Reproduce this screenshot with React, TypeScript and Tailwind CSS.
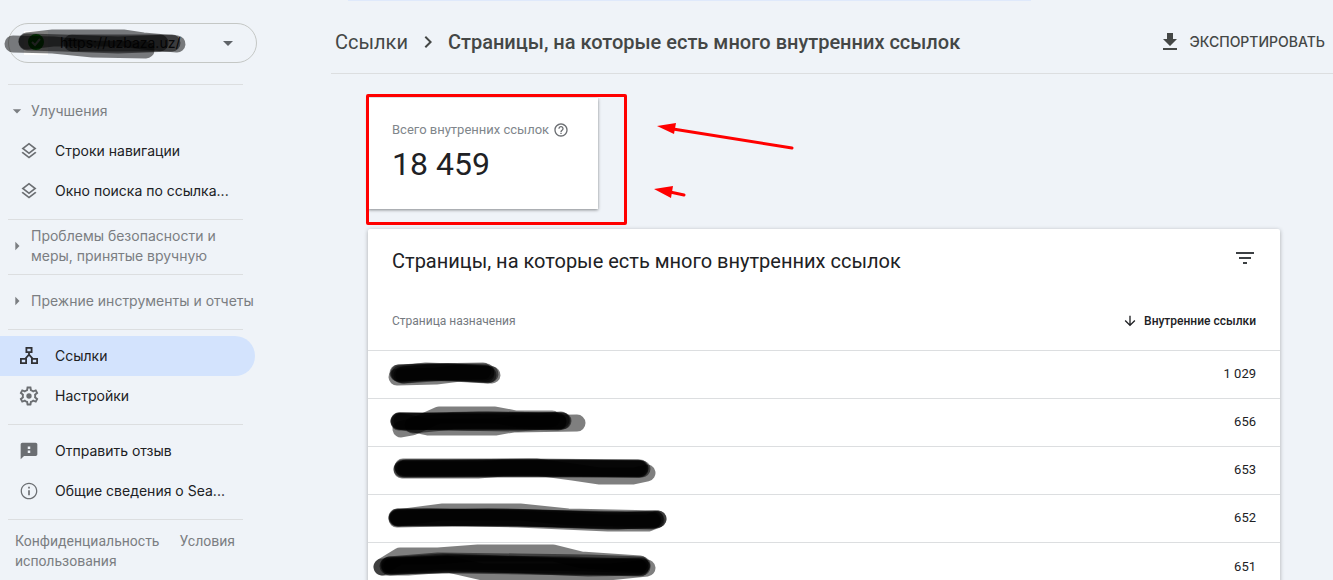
import type { ReactNode } from 'react';

type IconProps = { d: string; className?: string };

function Icon({ d, className = 'size-5' }: IconProps) {
  return (
    <svg viewBox="0 0 24 24" fill="currentColor" aria-hidden="true" className={`shrink-0 ${className}`}>
      <path fillRule="evenodd" d={d} />
    </svg>
  );
}

const icons = {
  layers:
    'M11.99 18.54l-7.37-5.73L3 14.07l9 7 9-7-1.63-1.27zM12 16l7.36-5.73L21 9l-9-7-9 7 1.63 1.27L12 16zm0-11.47L17.74 9 12 13.47 6.26 9 12 4.53z',
  feedback: 'M20 2H4c-1.1 0-2 .9-2 2v18l4-4h14c1.1 0 2-.9 2-2V4c0-1.1-.9-2-2-2zm-6.500 12.500h-3v-3h3v3zm0-5h-3v-3h3v3z',
  info: 'M11 17h2v-6h-2v6zm1-15C6.480 2 2 6.480 2 12s4.480 10 10 10 10-4.480 10-10S17.520 2 12 2zm0 18.500c-4.700 0-8.500-3.800-8.500-8.500S7.300 3.500 12 3.500s8.500 3.800 8.500 8.500-3.800 8.500-8.500 8.500zM11 9h2V7h-2v2z',
  help: 'M11 18h2v-2h-2v2zm1-16C6.480 2 2 6.480 2 12s4.480 10 10 10 10-4.480 10-10S17.520 2 12 2zm0 18c-4.410 0-8-3.590-8-8s3.590-8 8-8 8 3.590 8 8-3.590 8-8 8zm0-14c-2.210 0-4 1.790-4 4h2c0-1.100.900-2 2-2s2 .900 2 2c0 2-3 1.750-3 5h2c0-2.250 3-2.500 3-5 0-2.210-1.790-4-4-4z',
  download: 'M19 9h-4V3H9v6H5l7 7 7-7zM5 18v2h14v-2H5z',
  filter: 'M10 18h4v-2h-4v2zM3 6v2h18V6H3zm3 7h12v-2H6v2z',
  arrowDown: 'M20 12l-1.410-1.410L13 16.170V4h-2v12.170l-5.580-5.590L4 12l8 8 8-8z',
  chevron: 'M10 6L8.590 7.410 13.170 12l-4.580 4.590L10 18l6-6z',
  caretDown: 'M7 10l5 5 5-5z',
  caretRight: 'M10 17l5-5-5-5z',
};

function GearIcon() {
  return (
    <svg viewBox="1.5 1.5 21 21" fill="currentColor" aria-hidden="true" className="size-5 shrink-0">
      <path
        fillRule="evenodd"
        d="M19.430 12.980c.040-.320.070-.640.070-.980s-.030-.660-.070-.980l2.110-1.650c.190-.150.240-.420.120-.640l-2-3.460c-.120-.220-.390-.300-.610-.220l-2.490 1c-.520-.400-1.080-.730-1.690-.980l-.380-2.650C14.460 2.180 14.250 2 14 2h-4c-.250 0-.460.180-.490.420l-.380 2.650c-.610.250-1.170.590-1.690.980l-2.490-1c-.230-.090-.490 0-.610.220l-2 3.460c-.130.220-.070.490.120.640l2.110 1.650c-.040.320-.070.650-.070.980s.030.660.070.980l-2.110 1.650c-.190.150-.240.420-.120.640l2 3.460c.120.220.390.300.610.220l2.490-1c.520.400 1.080.730 1.690.980l.380 2.650c.030.240.240.420.490.420h4c.250 0 .460-.180.490-.420l.380-2.650c.610-.250 1.170-.590 1.690-.980l2.490 1c.230.090.490 0 .610-.220l2-3.460c.120-.220.070-.490-.120-.640l-2.110-1.650zM17.450 11.270c.040.310.050.520.050.730s-.020.430-.050.730l-.140 1.130.890.700 1.080.840-.700 1.210-1.270-.510-1.040-.420-.900.680c-.430.320-.840.560-1.250.730l-1.060.430-.160 1.130-.200 1.350h-1.400l-.190-1.350-.160-1.130-1.060-.430c-.430-.180-.830-.410-1.230-.710l-.910-.700-1.060.430-1.270.510-.700-1.210 1.080-.840.890-.700-.140-1.130c-.030-.310-.050-.540-.050-.740s.020-.430.050-.730l.140-1.130-.890-.700-1.080-.840.700-1.210 1.270.510 1.040.420.900-.680c.430-.320.840-.560 1.250-.730l1.060-.430.160-1.130.200-1.350h1.390l.190 1.350.160 1.130 1.060.430c.430.180.830.410 1.230.710l.910.700 1.060-.430 1.270-.510.700 1.210-1.070.850-.890.700.140 1.130z"
      />
      <circle cx="12" cy="12" r="2.8" />
    </svg>
  );
}

function LinksIcon() {
  return (
    <svg viewBox="0 0 20 20" fill="none" stroke="currentColor" strokeWidth="1.8" aria-hidden="true" className="size-5 shrink-0">
      <path d="M7.4 1.9h5.2v4.2H7.4zM1.9 12.9h5.200v4.200H1.900zM12.900 12.900h5.200v4.200h-5.200zM10 6v3.200M10 8.700L6 13M10 8.700l4 4.300" />
    </svg>
  );
}

function Scribble({ strokes }: { strokes: string[] }) {
  return (
    <svg
      width="300"
      height="48"
      fill="none"
      stroke="#000"
      strokeLinecap="round"
      strokeLinejoin="round"
      aria-hidden="true"
      className="pointer-events-none absolute top-0 left-0 overflow-visible"
    >
      {strokes.map((d) => (
        <path key={d} d={d} strokeWidth="17" strokeOpacity="0.5" />
      ))}
    </svg>
  );
}

const rows = [
  {
    count: '1 029',
    strokes: [
      'M29 26L68 25L92 22L124 24',
      'M30 22L60 21L118 21',
      'M31 22L50 21L85 22L120 24',
      'M34 24L62 21L115 20',
      'M32 23L58 20L110 22L122 23',
      'M36 24L80 21L118 23',
    ],
  },
  {
    count: '656',
    strokes: [
      'M33 30L44 28L71 16L127 16L148 20L184 20',
      'M31 22L60 28L127 28L145 25L209 24',
      'M31 22L55 22L110 21L194 22',
      'M32 22L80 23L150 24L193 21',
      'M45 26L85 22L140 22L190 23',
      'M34 22L100 23L190 22',
      'M31 23L120 21L195 22',
    ],
  },
  {
    count: '653',
    strokes: [
      'M35 20L60 20L168 20L205 25L232 29L265 29L279 26',
      'M34 23L110 23L135 21L272 21',
      'M35 21L80 21L160 20L270 21',
      'M36 22L272 22',
      'M38 21L150 21L271 22',
      'M34 22L200 21L274 22',
    ],
  },
  {
    count: '652',
    strokes: [
      'M29 23L75 17L152 17L200 22L290 24',
      'M30 23L60 22L150 24L240 28L280 28L290 24',
      'M29 22L150 23L240 26L288 25',
      'M29 24L120 22L210 24L285 25',
      'M31 23L160 23L250 26L287 24',
      'M30 22L140 22L230 25L284 26',
    ],
  },
  {
    count: '651',
    strokes: [
      'M14 24L32 13L70 13L110 10L185 10L213 17L272 21',
      'M14 24L40 24L80 21L115 29L240 29L279 25',
      'M21 22L70 18L150 19L220 20L274 22',
      'M22 24L80 20L150 22L220 25L274 24',
      'M20 23L75 19L200 23L272 25',
      'M24 23L100 21L200 22L270 24',
      'M22 22L90 22L210 24L273 23',
    ],
  },
];

function Section({ children }: { children: ReactNode }) {
  return (
    <div className="pb-2">
      <hr className="mr-4 ml-2 border-[#dcdee0]" />
      <div className="pt-1.5">{children}</div>
    </div>
  );
}

function NavItem({ icon, label, active = false }: { icon: ReactNode; label: string; active?: boolean }) {
  return (
    <a
      href="#"
      aria-current={active ? 'page' : undefined}
      className={`mr-1 flex h-10 items-center gap-4 rounded-r-full pr-6 pl-[19px] text-[#202124] ${active ? 'bg-[#d3e3fd]' : ''}`}
    >
      <span className={active ? 'text-[#303134]' : 'text-[#6b6e72]'}>{icon}</span>
      <span className="truncate">{label}</span>
    </a>
  );
}

function GroupButton({ label, open = false }: { label: string; open?: boolean }) {
  return (
    <button
      type="button"
      aria-expanded={open}
      className="flex min-h-10 w-full items-center gap-1 pl-[7px] text-left leading-5 text-[#7b7e82]"
    >
      <Icon d={open ? icons.caretDown : icons.caretRight} />
      <span>{label}</span>
    </button>
  );
}

function Sidebar() {
  return (
    <nav className="w-[259px] shrink-0 pt-[23px] font-[Inter,sans-serif] text-sm">
      <div className="relative mr-0.5 mb-[21px] ml-2 h-10">
        <select
          aria-label="Ресурс"
          className="h-10 w-full appearance-none rounded-full border border-[#c4c7c5] bg-transparent pl-[51px] text-[#202124]"
        >
          <option>https://uzbaza.uz/</option>
        </select>
        <svg width="24" height="24" viewBox="0 0 24 24" aria-hidden="true" className="absolute top-2 left-4">
          <path fill="#fff" d="M0 0h24v24H0z" />
          <circle cx="12" cy="11" r="8" fill="#00a000" />
          <path d="M8 11l3 3 5-6" fill="none" stroke="#fff" strokeWidth="2" />
        </svg>
        <Icon d={icons.caretDown} className="pointer-events-none absolute top-2 right-[17px] size-6 text-[#5f6368]" />
        <Scribble strokes={['M5 21L45 22L85 26L138 27', 'M19 18L45 15L115 15L135 18L169 21', 'M64 20L152 20', 'M19 19L55 20L110 22L164 20']} />
      </div>

      <Section>
        <GroupButton label="Улучшения" open />
        <NavItem icon={<Icon d={icons.layers} />} label="Строки навигации" />
        <NavItem icon={<Icon d={icons.layers} />} label="Окно поиска по ссылка..." />
      </Section>
      <Section>
        <GroupButton label="Проблемы безопасности и меры, принятые вручную" />
      </Section>
      <Section>
        <GroupButton label="Прежние инструменты и отчеты" />
      </Section>
      <Section>
        <NavItem icon={<LinksIcon />} label="Ссылки" active />
        <NavItem icon={<GearIcon />} label="Настройки" />
      </Section>
      <Section>
        <NavItem icon={<Icon d={icons.feedback} />} label="Отправить отзыв" />
        <NavItem icon={<Icon d={icons.info} />} label="Общие сведения о Sea..." />
      </Section>
      <Section>
        <div className="pt-[5px] pr-2 pl-[15px] font-[Roboto,sans-serif] leading-5 text-[#7b7e82]">
          <a href="#" className="mr-5">Конфиденциальность</a>
          <a href="#">Условия использования</a>
        </div>
      </Section>
    </nav>
  );
}

function Header() {
  return (
    <header className="flex h-[74px] items-center justify-between border-b border-[#dcdee0] pt-2.5 pr-2 pl-1 text-[#444746]">
      <div className="flex items-center gap-2 text-xl">
        <a href="#">Ссылки</a>
        <Icon d={icons.chevron} className="size-6" />
        <h1 className="font-medium whitespace-nowrap">Страницы, на которые есть много внутренних ссылок</h1>
      </div>
      <button type="button" className="flex items-center gap-2 font-[Inter,sans-serif] text-sm font-medium uppercase">
        <Icon d={icons.download} className="size-6" />
        Экспортировать
      </button>
    </header>
  );
}

function TotalCard() {
  return (
    <section className="relative h-[111px] w-[230px] bg-white pt-6 pl-6 shadow-[0_1px_3px_rgba(0,0,0,0.45)]">
      <div className="flex items-center gap-1 text-[13px] leading-4 text-[#80868b]">
        Всего внутренних ссылок
        <Icon d={icons.help} className="size-4 text-[#6b6e72]" />
      </div>
      <p className="mt-1.5 text-[32px] leading-10 text-[#202124]">18 459</p>

      {/* annotations */}
      <div className="pointer-events-none absolute -top-1 -left-0.5 h-[131px] w-[261px] rounded-xs border-3 border-[#f00]" />
      <svg width="140" height="110" fill="#f00" stroke="#f00" aria-hidden="true" className="absolute top-0 left-[287px] overflow-visible">
        <path stroke="none" d="M2 28L21 25L19 36zM-1 91L18 88L16 100z" />
        <path fill="none" strokeWidth="3" strokeLinecap="round" d="M18 31L137 50M15 94L29 97" />
      </svg>
    </section>
  );
}

function PagesTable() {
  return (
    <section className="mt-5 rounded-xs bg-white shadow-[0_1px_4px_rgba(0,0,0,0.3)]">
      <div className="flex h-16 items-center justify-between pr-[23px] pl-6">
        <h2 className="text-xl text-[#202124]">Страницы, на которые есть много внутренних ссылок</h2>
        <button type="button" aria-label="Фильтр" className="pb-1.5 text-[#3c4043]">
          <Icon d={icons.filter} className="size-6" />
        </button>
      </div>
      <table className="w-full text-[13px] text-[#202124]">
        <thead>
          <tr className="h-[57px] text-xs">
            <th scope="col" className="pl-6 text-left font-normal text-[#757a80]">Страница назначения</th>
            <th scope="col" className="pr-6 font-medium" aria-sort="descending">
              <button type="button" className="ml-auto flex items-center gap-1.5">
                <Icon d={icons.arrowDown} className="size-4" />
                Внутренние ссылки
              </button>
            </th>
          </tr>
        </thead>
        <tbody>
          {rows.map((row) => (
            <tr key={row.count} className="h-12 border-t border-[#dcdee0]">
              <td className="relative">
                <Scribble strokes={row.strokes} />
              </td>
              <td className="pr-6 text-right">{row.count}</td>
            </tr>
          ))}
        </tbody>
      </table>
    </section>
  );
}

export default function App() {
  return (
    <div className="flex h-screen overflow-hidden bg-[#eff3f8] font-[Roboto,sans-serif]">
      <Sidebar />
      <main className="relative ml-[72px] min-w-0 flex-1">
        <div className="absolute top-0 right-[302px] left-[17px] h-px bg-[#dfe9fb]" />
        <Header />
        <div className="pt-6 pr-[53px] pl-[37px]">
          <TotalCard />
          <PagesTable />
        </div>
      </main>
    </div>
  );
}
